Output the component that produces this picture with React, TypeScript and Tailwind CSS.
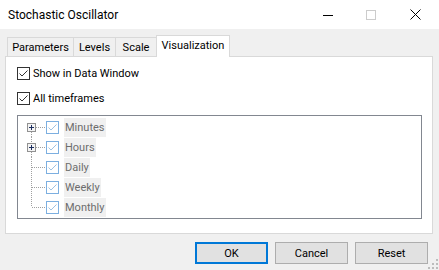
import React from "react";

const Check = ({ tree = false }: { tree?: boolean }) => (
  <svg width="13" height="13" viewBox="0 0 13 13" className="shrink-0" shapeRendering="crispEdges">
    <rect x="0.5" y="0.5" width="12" height="12" fill="#fff" stroke={tree ? "#7cafe0" : "#333333"} />
    <path
      d="M2.5 6.5 L5 9 L10.5 3.5"
      fill="none"
      stroke={tree ? "#9fc2e3" : "#333333"}
      strokeWidth="1"
      shapeRendering="auto"
    />
  </svg>
);

// connector lines + expander box for each tree row (local coords, 28x20)
const TreeLines = ({ idx, plus }: { idx: number; plus: boolean }) => {
  const last = idx === 4;
  const first = idx === 0;
  return (
    <svg width="28" height="20" viewBox="0 0 28 20" className="shrink-0" shapeRendering="crispEdges">
      {/* vertical */}
      {!first && <line x1="13.5" y1="0" x2="13.5" y2={plus ? 6 : last ? 10 : 20} stroke="#a0a0a0" strokeDasharray="1 1" />}
      {plus && <line x1="13.5" y1="15" x2="13.5" y2="20" stroke="#a0a0a0" strokeDasharray="1 1" />}
      {/* horizontal */}
      <line x1={plus ? 18 : 14} y1="10.5" x2="27" y2="10.5" stroke="#a0a0a0" strokeDasharray="1 1" />
      {plus && (
        <g>
          <rect x="9.5" y="6.5" width="8" height="8" fill="#f4f4f4" stroke="#919191" />
          <line x1="11" y1="10.5" x2="16" y2="10.5" stroke="#1c2e5e" />
          <line x1="13.5" y1="8" x2="13.5" y2="13" stroke="#1c2e5e" />
        </g>
      )}
    </svg>
  );
};

const tabs = [
  { label: "Parameters", w: "w-[67px]" },
  { label: "Levels", w: "w-[43px]" },
  { label: "Scale", w: "w-[42px]" },
];

const rows = [
  { label: "Minutes", plus: true },
  { label: "Hours", plus: true },
  { label: "Daily", plus: false },
  { label: "Weekly", plus: false },
  { label: "Monthly", plus: false },
];

export default function App() {
  return (
    <div className="relative w-[439px] h-[270px] bg-[#f0f0f0] flex flex-col overflow-hidden text-[11px] text-black font-['Roboto',sans-serif]">
      {/* title bar */}
      <div className="h-[29px] bg-white flex items-center shrink-0">
        <span className="ml-[8px] leading-none flex-1 text-[12px]">Stochastic Oscillator</span>
        <div className="w-[45px] h-full flex items-center justify-center">
          <div className="w-[10px] h-px bg-black mt-[1px] ml-[3px]" />
        </div>
        <div className="w-[45px] h-full flex items-center justify-center">
          <div className="w-[10px] h-[10px] border border-[#cccccc] -ml-[1px]" />
        </div>
        <div className="w-[45px] h-full flex items-center justify-center">
          <svg width="11" height="11" viewBox="0 0 11 11" className="-ml-[2px]">
            <path d="M0.5 0.5 L10.5 10.5 M10.5 0.5 L0.5 10.5" stroke="#000" strokeWidth="1" />
          </svg>
        </div>
      </div>

      {/* tabs */}
      <div className="pl-[7px] pt-[6px] flex items-end shrink-0">
        {tabs.map((t, i) => (
          <div
            key={t.label}
            className={`${t.w} h-[19px] ${i > 0 ? "-ml-px" : ""} border border-b-0 border-[#d9d9d9] bg-[#f0f0f0] flex items-center justify-center leading-none`}
          >
            {t.label}
          </div>
        ))}
        <div className="relative z-10 w-[74px] h-[22px] -ml-px -mb-px border border-b-0 border-[#d9d9d9] bg-white flex items-start justify-center pt-[4px] leading-none">
          Visualization
        </div>
      </div>

      {/* panel */}
      <div className="ml-[5px] w-[428px] h-[178px] border border-[#d9d9d9] bg-white pl-[11px] pt-[10px] shrink-0">
        <div className="flex items-center h-[13px] gap-[3px]">
          <Check />
          <span className="leading-none">Show in Data Window</span>
        </div>
        <div className="flex items-center h-[13px] gap-[3px] mt-[12px]">
          <Check />
          <span className="leading-none">All timeframes</span>
        </div>
        <div className="mt-[10px] w-[405px] h-[104px] border border-[#828790] pt-[1px]">
          {rows.map((r, i) => (
            <div key={r.label} className="flex items-center h-[20px]">
              <TreeLines idx={i} plus={r.plus} />
              <Check tree />
              <span className="ml-[5px] h-[19px] px-[1px] bg-[#f0f0f0] text-[#6d6d6d] flex items-center leading-none">
                {r.label}
              </span>
            </div>
          ))}
        </div>
      </div>

      {/* buttons */}
      <div className="mt-[8px] pr-[11px] flex justify-end gap-[7px]">
        <button className="w-[73px] h-[22px] bg-[#e1e1e1] border-2 border-[#0078d7] leading-none">OK</button>
        <button className="w-[73px] h-[22px] bg-[#e1e1e1] border border-[#adadad] leading-none">Cancel</button>
        <button className="w-[73px] h-[22px] bg-[#e1e1e1] border border-[#adadad] leading-none">Reset</button>
      </div>

      {/* size grip */}
      <svg width="12" height="12" viewBox="0 0 12 12" className="absolute right-0 bottom-0" shapeRendering="crispEdges">
        {[
          [9, 1],
          [9, 5],
          [5, 5],
          [9, 9],
          [5, 9],
          [1, 9],
        ].map(([x, y]) => (
          <rect key={`${x}-${y}`} x={x} y={y} width="2" height="2" fill="#bcbcbc" />
        ))}
      </svg>
    </div>
  );
}
